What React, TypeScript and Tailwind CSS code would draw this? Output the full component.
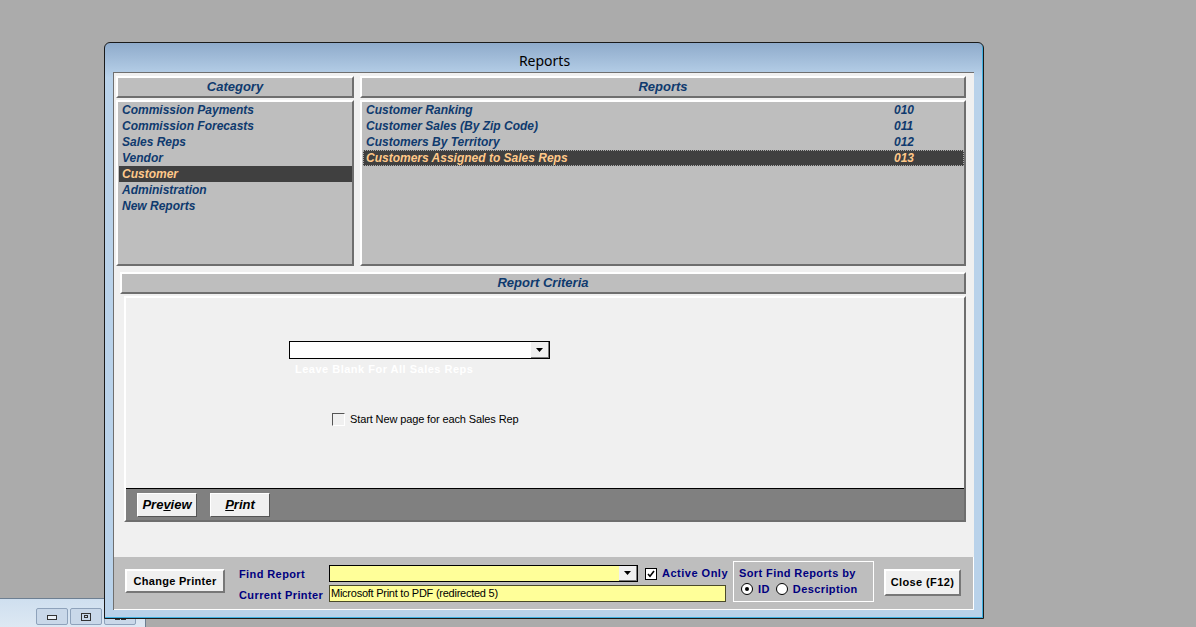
const categories = [
  "Commission Payments",
  "Commission Forecasts",
  "Sales Reps",
  "Vendor",
  "Customer",
  "Administration",
  "New Reports",
];

const reports = [
  { name: "Customer Ranking", id: "010" },
  { name: "Customer Sales (By Zip Code)", id: "011" },
  { name: "Customers By Territory", id: "012" },
  { name: "Customers Assigned to Sales Reps", id: "013" },
];

const HeaderBar = ({ title }: { title: string }) => (
  <div className="h-[22px] w-full shrink-0 bg-[#bebebe] border-2 border-t-white border-l-white border-b-[#6e6e6e] border-r-[#6e6e6e] flex items-center justify-center text-[13px] font-bold italic text-[#0f3a6e]">
    {title}
  </div>
);

const ComboArrow = () => (
  <div className="w-[18px] h-full bg-[#f0f0f0] border-r border-b border-[#7a7a7a] flex items-center justify-center">
    <svg width="7" height="4" viewBox="0 0 7 4">
      <path d="M0 0h7L3.5 4z" fill="#000" />
    </svg>
  </div>
);

const ActionButton = ({ first, under, rest }: { first: string; under: string; rest: string }) => (
  <div className="w-[60px] h-[24px] bg-[#f0f0f0] border border-t-white border-l-white border-r-[#555] border-b-[#555] flex items-center justify-center text-[13px] font-bold italic text-black">
    {first}
    <span className="underline">{under}</span>
    {rest}
  </div>
);

const SmallButton = ({ label, className }: { label: string; className: string }) => (
  <div
    className={`bg-[#f0f0f0] border-2 border-t-white border-l-white border-r-[#777] border-b-[#777] flex items-center justify-center text-[11px] font-bold text-black ${className}`}
  >
    {label}
  </div>
);

const MiniWindow = () => (
  <div className="absolute left-0 bottom-0 w-[146px] h-[29px] bg-gradient-to-b from-[#cfdfef] to-[#dde8f3] border-t border-r border-[#6d7f92] flex items-end pl-[36px] pb-[2px] gap-[2px]">
    <div className="w-[32px] h-[17px] rounded-[2px] border border-[#8ea2bb] bg-[#c9d8e9] flex items-end justify-center pb-[4px]">
      <div className="w-[10px] h-[5px] border border-[#333] bg-white/60" />
    </div>
    <div className="w-[32px] h-[17px] rounded-[2px] border border-[#8ea2bb] bg-[#c9d8e9] flex items-center justify-center">
      <div className="w-[10px] h-[8px] border border-[#333] flex items-center justify-center">
        <div className="w-[4px] h-[3px] border border-[#333]" />
      </div>
    </div>
    <div className="w-[32px] h-[17px] rounded-[2px] border border-[#8ea2bb] bg-[#c9d8e9] flex items-end justify-center gap-[1px] pb-[4px]">
      <div className="w-[5px] h-[4px] border border-[#333]" />
      <div className="w-[5px] h-[4px] border border-[#333]" />
    </div>
  </div>
);

export default function App() {
  return (
    <div className="relative h-[627px] w-[1196px] overflow-hidden bg-[#ababab] pl-[104px] pt-[42px] font-['Liberation_Sans',Arial,sans-serif]">
      <MiniWindow />
      <div className="relative w-[880px] h-[577px] rounded-t-[6px] border border-[#1a1a1a] bg-gradient-to-b from-[#8fabcb] to-[#b9d2ea] to-[6%] pt-[29px] pl-[8px] pr-[8px] pb-[7px] shadow-[inset_-1px_-1px_0_#3fb0e0]">
        <div className="absolute left-0 right-0 top-[9px] text-center text-[14px] leading-[17px] text-black font-['Noto_Sans',sans-serif] pl-[1px]">
          Reports
        </div>

        <div className="w-[861px] h-[538px] border-t border-l border-[#6f6f6f] bg-[#f0f0f0] flex flex-col">
          {/* top lists */}
          <div className="flex gap-[6px] pl-[2px] pt-[3px]">
            <div className="w-[238px] flex flex-col gap-[2px]">
              <HeaderBar title="Category" />
              <div className="h-[166px] bg-[#bebebe] border-2 border-t-white border-l-white border-b-[#6e6e6e] border-r-[#6e6e6e] pl-[1px] text-[12px] font-bold italic">
                {categories.map((c) => (
                  <div
                    key={c}
                    className={`h-[16px] leading-[16px] pl-[3px] ${c === "Customer" ? "bg-[#404040] text-[#ffc98a]" : "text-[#0f3a6e]"}`}
                  >
                    {c}
                  </div>
                ))}
              </div>
            </div>
            <div className="w-[606px] flex flex-col gap-[2px]">
              <HeaderBar title="Reports" />
              <div className="h-[166px] bg-[#bebebe] border-2 border-t-white border-l-white border-b-[#6e6e6e] border-r-[#6e6e6e] pl-[1px] text-[12px] font-bold italic">
                {reports.map((r) => (
                  <div
                    key={r.id}
                    className={`h-[16px] leading-[16px] pl-[3px] flex ${r.id === "013" ? "bg-[#404040] text-[#ffc98a] outline-1 -outline-offset-1 outline-dotted outline-[#aaa]" : "text-[#0f3a6e]"}`}
                  >
                    <span className="w-[528px]">{r.name}</span>
                    <span>{r.id}</span>
                  </div>
                ))}
              </div>
            </div>
          </div>

          {/* criteria */}
          <div className="ml-[6px] mt-[6px] w-[846px]">
            <HeaderBar title="Report Criteria" />
          </div>
          <div className="ml-[10px] mt-[2px] w-[842px] h-[226px] border-2 border-t-white border-l-white border-r-[#6e6e6e] border-b-[#6e6e6e] bg-[#f0f0f0] flex flex-col">
            <div className="flex-1 pt-[43px] pl-[163px]">
              <div className="w-[261px] h-[18px] border border-black bg-white flex justify-end">
                <ComboArrow />
              </div>
              <div className="pl-[6px] mt-[2px] text-[11px] leading-[16px] font-bold tracking-[0.5px] text-white">
                Leave Blank For All Sales Reps
              </div>
              <div className="flex items-center gap-[5px] ml-[43px] mt-[35px] text-[11px] tracking-[-0.12px] leading-[14px] text-black">
                <div className="w-[13px] h-[13px] border border-[#555] border-r-white border-b-white bg-[#f0f0f0]" />
                Start New page for each Sales Rep
              </div>
            </div>
            <div className="h-[32px] shrink-0 border-t border-black bg-[#808080] flex items-center gap-[13px] pl-[11px]">
              <ActionButton first="Pre" under="v" rest="iew" />
              <ActionButton first="" under="P" rest="rint" />
            </div>
          </div>

          {/* bottom bar */}
          <div className="mt-auto h-[53px] border-b border-r border-white bg-[#bebebe] flex pl-[11px] text-[11px] font-bold tracking-[0.4px] text-[#00007f]">
            <SmallButton label="Change Printer" className="w-[100px] h-[24px] mt-[12px] shrink-0 tracking-[0.3px]" />
            <div className="ml-[14px] mt-[8px] w-[90px] shrink-0 flex flex-col pt-[1px]">
              <div className="h-[20px] leading-[17px]">Find Report</div>
              <div className="h-[20px] leading-[18px]">Current Printer</div>
            </div>
            <div className="mt-[8px] w-[397px] shrink-0">
              <div className="flex">
                <div className="w-[309px] shrink-0 h-[17px] border border-black bg-[#ffff99] flex justify-end">
                  <ComboArrow />
                </div>
                <div className="ml-[7px] flex items-center gap-[5px] h-[17px]">
                  <div className="w-[12px] h-[12px] border border-black bg-white flex items-center justify-center">
                    <svg width="8" height="8" viewBox="0 0 8 8">
                      <path d="M1 4l2 2.2L7 1" fill="none" stroke="#000" strokeWidth="1.6" />
                    </svg>
                  </div>
                  <span className="whitespace-nowrap tracking-[0.5px]">Active Only</span>
                </div>
              </div>
              <div className="mt-[3px] h-[17px] w-[397px] border border-[#4a4a2a] bg-[#ffff99] pl-[1px] text-[11px] leading-[15px] font-normal tracking-[-0.25px] text-black">
                Microsoft Print to PDF (redirected 5)
              </div>
            </div>
            <div className="ml-[7px] mt-[4px] w-[141px] h-[41px] shrink-0 border border-white pl-[5px] pt-[3px]">
              <div className="leading-[16px] whitespace-nowrap">Sort Find Reports by</div>
              <div className="flex items-center h-[16px]">
                <div className="ml-[2px] w-[12px] h-[12px] rounded-full border border-black bg-white flex items-center justify-center">
                  <div className="w-[4px] h-[4px] rounded-full bg-black" />
                </div>
                <span className="ml-[5px]">ID</span>
                <div className="ml-[6px] w-[12px] h-[12px] rounded-full border border-black bg-white" />
                <span className="ml-[5px]">Description</span>
              </div>
            </div>
            <SmallButton label="Close (F12)" className="ml-[10px] w-[77px] h-[27px] mt-[12px] shrink-0" />
          </div>
        </div>
      </div>
    </div>
  );
}
